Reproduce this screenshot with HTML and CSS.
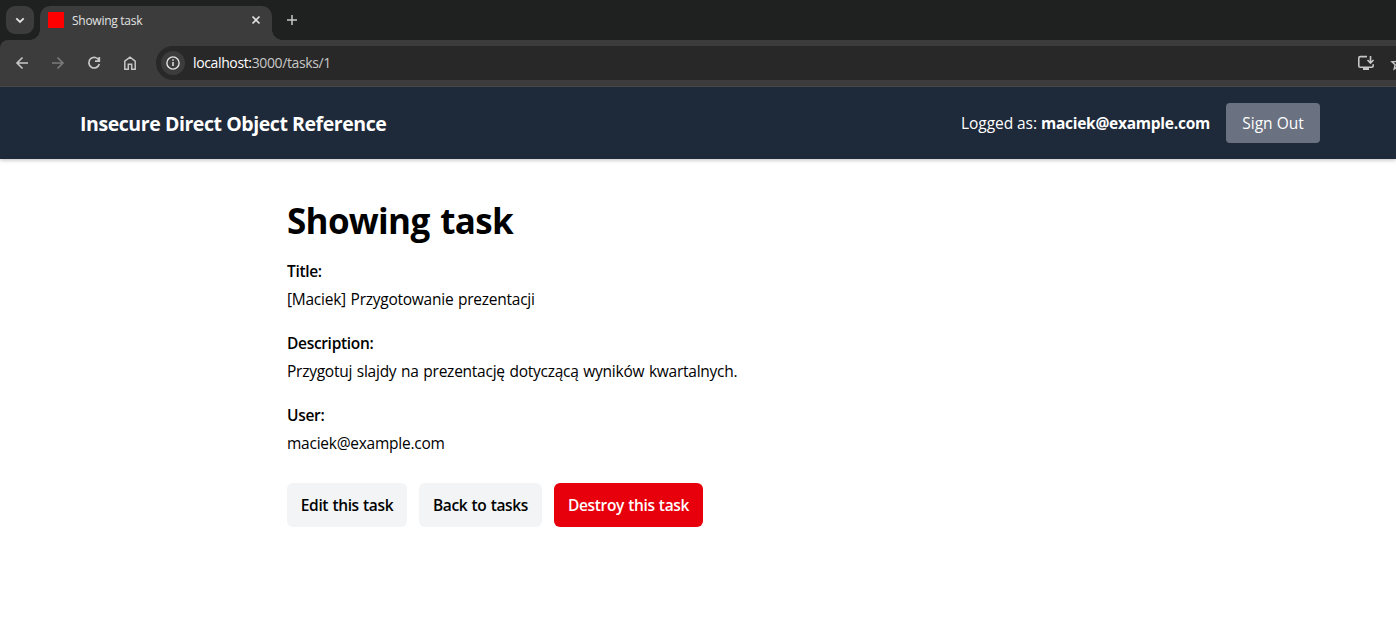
FILE: index.html
```html
<!DOCTYPE html>
<html lang="en">
<head>
<meta charset="utf-8">
<title>Showing task</title>
<link rel="stylesheet" href="styles.css">
</head>
<body>
<div class="browser">
  <div class="tabstrip">
    <button class="tab-search" aria-label="Search tabs"><svg width="28" height="28" viewBox="0 0 28 28"><path d="M10.300 12.300 14 16l3.700-3.700" stroke="#e3e3e3" stroke-width="1.800" fill="none"/></svg></button>
    <div class="tab">
      <span class="favicon"></span>
      <span class="tab-title">Showing task</span>
      <svg class="tab-close" width="16" height="16" viewBox="0 0 16 16"><path d="m4.500 4.500 7 7m0-7-7 7" stroke="#e3e3e3" stroke-width="1.600"/></svg>
    </div>
    <svg class="new-tab" width="16" height="16" viewBox="0 0 16 16"><path d="M8 3v10M3 8h10" stroke="#c7c7c7" stroke-width="1.500"/></svg>
  </div>
  <div class="toolbar">
    <svg class="nav-icon" width="20" height="20" viewBox="0 0 20 20"><path d="M16 10H5m5.500-5.500L5 10l5.500 5.500" stroke="#c7c7c7" stroke-width="1.600" fill="none"/></svg>
    <svg class="nav-icon" width="20" height="20" viewBox="0 0 20 20"><path d="M4 10h11M9.500 4.500 15 10l-5.500 5.500" stroke="#7b7b7b" stroke-width="1.600" fill="none"/></svg>
    <svg class="nav-icon" width="20" height="20" viewBox="0 0 20 20"><path d="M15 7.500A5.300 5.300 0 1 0 15.300 11M15.300 4v4.200H11" stroke="#c7c7c7" stroke-width="1.700" fill="none"/></svg>
    <svg class="nav-icon" width="20" height="20" viewBox="0 0 20 20"><path d="M4.800 8.200 10 4.200l5.200 4v8h-3.500v-4.900H8.300v4.900H4.800z" stroke="#c7c7c7" stroke-width="1.500" fill="none"/></svg>
    <div class="omnibox">
      <span class="site-info"><svg width="24" height="24" viewBox="0 0 24 24"><circle cx="12" cy="12" r="6.100" stroke="#e3e3e3" stroke-width="1.400" fill="none"/><path d="M12 11v4M12 8.300v1.500" stroke="#e3e3e3" stroke-width="1.500"/></svg></span>
      <span class="url"><b>localhost:</b>3000/tasks/1</span>
      <svg class="install" width="20" height="20" viewBox="0 0 20 20"><path d="M11 3.600H4.300q-1.500 0-1.500 1.500v7.800q0 1.300 1.500 1.300h11.400q1.500 0 1.500-1.500v-1.500M14.500 3v6.500M11.500 7l3 3 3-3" stroke="#c7c7c7" stroke-width="1.600" fill="none"/><path d="M7 14h6v3H7z" fill="#c7c7c7"/></svg>
      <svg class="bookmark" width="20" height="20" viewBox="0 0 20 20"><path d="m10 4.500 1.700 3.900 4.300.4-3.200 2.900 1 4.200-3.800-2.200-3.800 2.200 1-4.200L4 8.800l4.300-.4z" stroke="#c7c7c7" stroke-width="1.500" fill="none"/></svg>
    </div>
  </div>
</div>
<header class="site-header">
  <a class="brand">Insecure Direct Object Reference</a>
  <div class="account">
    <span class="logged">Logged as: <strong>maciek@example.com</strong></span>
    <button class="sign-out">Sign Out</button>
  </div>
</header>
<main class="content">
  <h1>Showing task</h1>
  <div class="field"><strong>Title:</strong><p>[Maciek] Przygotowanie prezentacji</p></div>
  <div class="field"><strong>Description:</strong><p>Przygotuj slajdy na prezentację dotyczącą wyników kwartalnych.</p></div>
  <div class="field"><strong>User:</strong><p>maciek@example.com</p></div>
  <div class="actions">
    <a class="btn edit">Edit this task</a>
    <a class="btn back">Back to tasks</a>
    <button class="btn destroy">Destroy this task</button>
  </div>
</main>
</body>
</html>
```
FILE: styles.css
```css
* { box-sizing: border-box; }
body { margin: 0; background: #fff; color: #000; font: 15.5px/24px "Segoe UI", "Open Sans", "Noto Sans", sans-serif; overflow: hidden; }
button { font: inherit; border: 0; padding: 0; }
svg { display: block; flex: none; }
p, h1 { margin: 0; }
span, strong, p, a, button { white-space: nowrap; }

.browser { height: 87px; background: #1f2120; overflow: hidden; }
.tabstrip { height: 40px; display: flex; align-items: flex-start; padding: 6px 0 0 6px; }
.tab-search { width: 28px; height: 28px; border-radius: 9px; background: #3c3c3c; }
.tab { position: relative; width: 232px; height: 34px; margin-left: 6px; padding: 0 8px; display: flex; align-items: flex-start; background: #3c3c3c; border-radius: 10px 10px 0 0; }
.tab::before, .tab::after { content: ""; position: absolute; bottom: 0; width: 10px; height: 10px; }
.tab::before { left: -10px; background: radial-gradient(circle at 0 0, transparent 9.5px, #3c3c3c 10px); }
.tab::after { right: -10px; background: radial-gradient(circle at 100% 0, transparent 9.5px, #3c3c3c 10px); }
.favicon { width: 16px; height: 16px; margin-top: 6px; background: #f00; }
.tab-title { margin: 5px 0 0 8px; font-size: 12px; line-height: 20px; color: #e3e3e3; letter-spacing: -.27px; }
.tab-close { margin: 6px 0 0 auto; }
.new-tab { margin: 6px 0 0 12px; }
.toolbar { height: 47px; background: #3c3c3c; border-radius: 8px 0 0 0; border-bottom: 1px solid #4a4a4a; display: flex; align-items: flex-start; gap: 16px; padding: 6px 0 0 12px; }
.nav-icon { margin-top: 7px; }
.omnibox { flex: 1; height: 34px; background: #282828; border-radius: 17px 0 0 17px; display: flex; align-items: center; padding-left: 5px; overflow: hidden; }
.site-info { background: #3c3c3c; border-radius: 50%; }
.url { margin-left: 8px; font-size: 14px; letter-spacing: -.37px; color: #c7c7c7; }
.url b { font-weight: 400; color: #fff; }
.install { margin-left: auto; }
.bookmark { margin: 0 -12px 0 12px; }

.site-header { height: 72px; background: #1e2939; color: #fff; padding: 0 76px 0 80px; display: flex; align-items: center; justify-content: space-between; box-shadow: 0 1px 3px #0000001a, 0 2px 4px #00000020; }
.brand { font-size: 19.5px; font-weight: 700; letter-spacing: -.43px; padding-top: 2px; }
.account { display: flex; align-items: center; }
.logged { width: 249px; margin-right: 16px; letter-spacing: -.06px; }
.logged strong { letter-spacing: -.25px; }
.sign-out { width: 94px; height: 40px; border-radius: 4px; background: #6a7282; color: #fff; }

.content { padding: 42px 0 0 287px; }
h1 { font-size: 35px; line-height: 40px; font-weight: 700; letter-spacing: -.7px; word-spacing: 2.5px; margin-bottom: 18px; }
.field { height: 72px; }
.field strong { display: block; font-weight: 600; letter-spacing: -.32px; margin-bottom: 4px; }
.field p { letter-spacing: -.25px; word-spacing: .9px; }
.actions { display: flex; gap: 12px; margin-top: 8px; }
.btn { height: 44px; line-height: 44px; border-radius: 6px; background: #f3f4f6; font-weight: 600; letter-spacing: -.36px; word-spacing: .6px; text-align: center; }
.edit { width: 120px; }
.back { width: 123px; }
.destroy { width: 149px; background: #e7000b; color: #fff; }
```
